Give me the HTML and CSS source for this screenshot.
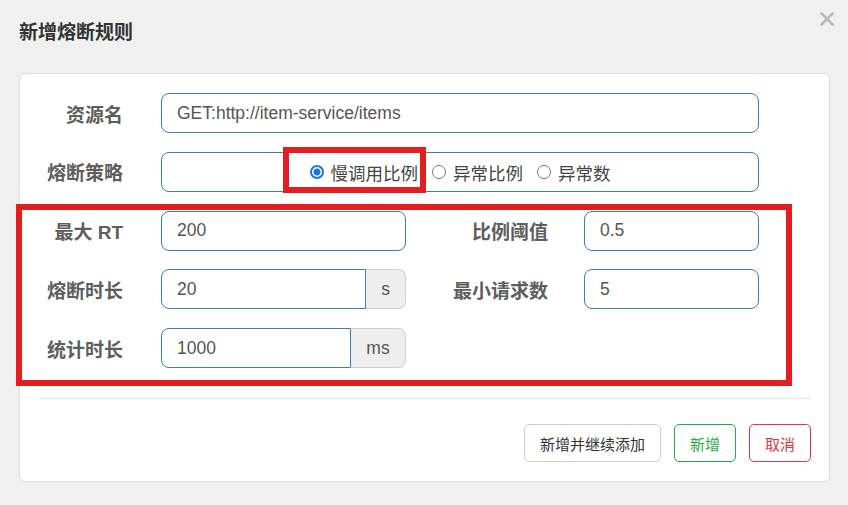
FILE: index.html
```html
<!DOCTYPE html>
<html lang="zh-CN">
<head>
<meta charset="utf-8">
<title>新增熔断规则</title>
<link rel="stylesheet" href="styles.css">
</head>
<body>
<div class="dialog">
  <div class="header">
    <h1 class="title">新增熔断规则</h1>
    <span class="close" aria-label="close">
      <svg width="14" height="14" viewBox="0 0 14 14"><path d="M1.5 1.5 L12.5 12.5 M12.5 1.5 L1.5 12.5" stroke="#b9b9b9" stroke-width="2.6" stroke-linecap="square" fill="none"/></svg>
    </span>
  </div>
  <div class="card">
    <div class="form">
      <label class="lbl">资源名</label>
      <div class="field wide"><div class="input">GET:http://item-service/items</div></div>

      <label class="lbl">熔断策略</label>
      <div class="field wide">
        <div class="input radios">
          <span class="radio on"><span class="dot"></span>慢调用比例</span>
          <span class="radio"><span class="dot"></span>异常比例</span>
          <span class="radio"><span class="dot"></span>异常数</span>
        </div>
      </div>

      <label class="lbl">最大 RT</label>
      <div class="field"><div class="input">200</div></div>
      <label class="lbl lbl-r">比例阈值</label>
      <div class="field"><div class="input">0.5</div></div>

      <label class="lbl">熔断时长</label>
      <div class="field group"><div class="input left">20</div><span class="addon s">s</span></div>
      <label class="lbl lbl-r">最小请求数</label>
      <div class="field"><div class="input">5</div></div>

      <label class="lbl">统计时长</label>
      <div class="field group"><div class="input left">1000</div><span class="addon ms">ms</span></div>
    </div>
    <div class="sep"></div>
    <div class="buttons">
      <button class="btn btn-default">新增并继续添加</button>
      <button class="btn btn-green">新增</button>
      <button class="btn btn-red">取消</button>
    </div>
  </div>
</div>
<div class="mark mark-big"></div>
<div class="mark mark-small"></div>
</body>
</html>
```
FILE: styles.css
```css
html, body {
  margin: 0;
  padding: 0;
}
body {
  position: relative;
  width: 848px;
  height: 505px;
  background: #f0f0f0;
  font-family: "Liberation Sans", "Noto Sans CJK SC", sans-serif;
  overflow: hidden;
}
.dialog {
  position: relative;
}
.header {
  height: 73px;
  box-sizing: border-box;
  padding: 22px 0 0 19px;
}
.title {
  margin: 0;
  font-size: 19px;
  line-height: 22px;
  font-weight: bold;
  color: #333;
}
.close {
  position: absolute;
  top: 12px;
  right: 14px;
  width: 14px;
  height: 14px;
  display: block;
}
.close svg { display: block; }
.card {
  margin: 0 18px 0 19px;
  background: #fff;
  border: 1px solid #dcdcdc;
  border-radius: 6px;
  padding: 19px 0 19px 0;
}
.form {
  display: grid;
  grid-template-columns: 141px 245px 178px 175px;
  grid-auto-rows: 40px;
  row-gap: 18.75px;
}
.lbl {
  display: flex;
  align-items: center;
  justify-content: flex-end;
  padding-right: 38px;
  font-size: 19px;
  font-weight: bold;
  color: #5e5e5e;
}
.lbl-r {
  padding-right: 36px;
}
.field {
  display: flex;
}
.field.wide {
  grid-column: 2 / 5;
}
.input {
  flex: 1;
  box-sizing: border-box;
  height: 40px;
  border: 1px solid #3b7dbd;
  border-radius: 8px;
  padding: 0 15px;
  display: flex;
  align-items: center;
  font-size: 17.5px;
  color: #555;
  background: #fff;
}
.input.left {
  border-radius: 8px 0 0 8px;
}
.addon {
  box-sizing: border-box;
  height: 40px;
  border: 1px solid #cfcfcf;
  border-left: none;
  border-radius: 0 8px 8px 0;
  background: #eee;
  display: flex;
  align-items: center;
  justify-content: center;
  font-size: 17.5px;
  color: #555;
}
.addon.s { width: 40px; }
.addon.ms { width: 55px; }
.radios {
  justify-content: center;
  gap: 14px;
  padding: 0;
  color: #444;
}
.radio {
  display: inline-flex;
  align-items: center;
  gap: 7px;
  font-size: 17.5px;
  line-height: 20px;
  padding-top: 4px;
}
.dot {
  box-sizing: border-box;
  width: 14px;
  height: 14px;
  border-radius: 50%;
  border: 1.5px solid #767676;
  background: #fff;
  flex: none;
  margin-top: -3px;
}
.radio.on .dot {
  border: 2px solid #1a73e8;
  background: radial-gradient(circle, #1a73e8 0 3.2px, #fff 3.8px);
}
.sep {
  height: 1px;
  background: #e5e5e5;
  margin: 30px 18px 0 19px;
}
.buttons {
  display: flex;
  justify-content: flex-end;
  gap: 13px;
  margin-top: 25px;
  padding-right: 18px;
}
.btn {
  height: 38px;
  padding: 0 15px;
  border-radius: 5px;
  background: #fff;
  font-family: "Liberation Sans", "Noto Sans CJK SC", sans-serif;
  font-size: 15px;
  border: 1px solid #ccc;
  color: #333;
}
.btn-green {
  border-color: #28a745;
  color: #28a745;
}
.btn-red {
  border-color: #dc3545;
  color: #dc3545;
}
.mark {
  position: absolute;
  box-sizing: border-box;
  border: 6px solid #e51c20;
  pointer-events: none;
}
.mark-big {
  left: 16px;
  top: 204px;
  width: 776px;
  height: 182px;
}
.mark-small {
  left: 283px;
  top: 147px;
  width: 143px;
  height: 46px;
}
```
